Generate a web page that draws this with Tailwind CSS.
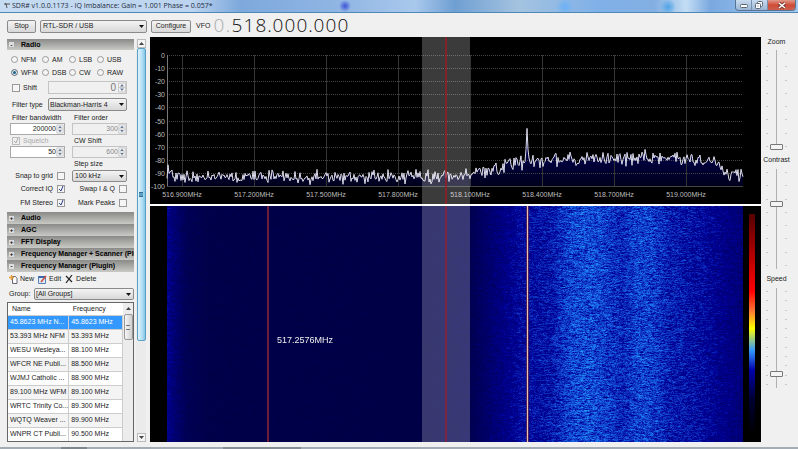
<!DOCTYPE html>
<html lang="en">
<head>
  <meta charset="UTF-8">
  <meta name="viewport" content="width=device-width, initial-scale=1">
  <title>SDR# v1.0.0.1173</title>
  <script src="https://cdn.jsdelivr.net/npm/@tailwindcss/browser@4"></script>
</head>
<body class="flex flex-col h-screen overflow-hidden bg-[#f0f0f0] text-[#222] text-[7px] leading-[10px] font-['Liberation_Sans',Arial,sans-serif]">

  <!-- Title bar -->
  <header class="flex items-start h-[13px] shrink-0 pl-1 border-b border-[#4f88b5] bg-[radial-gradient(circle_at_345px_6px,#4a62d8_1px,transparent_6px),radial-gradient(circle_at_565px_7px,#6fb2f5_1px,transparent_9px),radial-gradient(circle_at_668px_7px,#58a8e8_1px,transparent_8px),linear-gradient(90deg,#c6dcf2_0%,#bcd4ef_24%,#7ea9dc_30%,#8fb5e3_42%,#a9c8ec_52%,#6f9fd2_57%,#a4c3e0_65%,#7fb0e8_75%,#83afe2_82%,#c3ddf4_86%,#7aa9e0_89%,#a5c9ee_100%)]">
    <svg class="w-[7px] h-[9px] mt-px mr-px" viewBox="0 0 7 9"><path d="M0 3h6M2 3l1 4M1 2l2 2" stroke="#555" fill="none"/></svg>
    <h1 class="flex-1 text-[7px] leading-[12px] text-[#1c2a3c] font-['Open_Sans','Noto_Sans',sans-serif]">SDR# v1.0.0.1173 - IQ Imbalance: Gain = 1.001 Phase = 0.057*</h1>
    <div class="flex h-[11px] mr-[2px] rounded-b border border-t-0 border-[#587394] overflow-hidden">
      <button aria-label="Minimize" class="w-4 flex items-center justify-center border-r border-[#7890ac] bg-linear-to-b from-[#c9dcf0] to-[#9bb6d4]">
        <svg class="w-[8px] h-[6px]" viewBox="0 0 8 6"><rect x=".5" y="2.500" width="7" height="3" rx="1" fill="#fff" stroke="#5b6675"/></svg>
      </button>
      <button aria-label="Restore" class="w-4 flex items-center justify-center border-r border-[#7890ac] bg-linear-to-b from-[#c9dcf0] to-[#9bb6d4]">
        <svg class="w-[9px] h-[8px]" viewBox="0 0 9 8" fill="#fff" stroke="#5b6675"><rect x="2.500" y=".5" width="5" height="5" rx="1"/><rect x=".5" y="2.500" width="5" height="5" rx="1"/><path d="M2.500 5h1"/></svg>
      </button>
      <button aria-label="Close" class="w-[27px] flex items-center justify-center bg-linear-to-b from-[#e0988c] via-[#cf4a36] to-[#c9604d]">
        <svg class="w-[8px] h-[7px]" viewBox="0 0 8 7"><path d="M1 1l6 5M7 1l-6 5" stroke="#6d3028" stroke-width="3"/><path d="M1 1l6 5M7 1l-6 5" stroke="#fff" stroke-width="1.600"/></svg>
      </button>
    </div>
  </header>

  <!-- Toolbar -->
  <div class="flex items-center h-6 shrink-0 pl-[7px] pt-[2px]">
    <button class="w-[29px] h-[13px] border border-[#8a8a8a] rounded-xs bg-linear-to-b from-[#f4f4f4] to-[#d8d8d8]">Stop</button>
    <div class="relative ml-1 w-[107px]">
      <select aria-label="Source" class="block w-full h-[13px] pl-[2px] border border-[#8a8a8a] rounded-xs appearance-none bg-linear-to-b from-[#f4f4f4] to-[#d8d8d8]"><option>RTL-SDR / USB</option></select>
      <svg class="absolute right-[3px] top-[5px] w-[5px] h-[3px] pointer-events-none" viewBox="0 0 5 3"><path d="M0 0h5L2.500 3z" fill="#111"/></svg>
    </div>
    <button class="ml-1 w-10 h-[13px] border border-[#8a8a8a] rounded-xs bg-linear-to-b from-[#f4f4f4] to-[#d8d8d8]">Configure</button>
    <span class="ml-[5px] w-[17px]">VFO</span>
    <div class="flex text-[19px] leading-[20px] pb-[2px] font-light text-[#111] text-center font-['Open_Sans',Lato,sans-serif]">
      <span class="w-3 text-[#aaa]">0</span><span class="w-[6px] text-[#aaa]">.</span>
      <span class="w-3">5</span><span class="w-3">1</span><span class="w-3">8</span><span class="w-[5px]">.</span>
      <span class="w-3">0</span><span class="w-3">0</span><span class="w-3">0</span><span class="w-[5px]">.</span>
      <span class="w-3">0</span><span class="w-3">0</span><span class="w-3">0</span>
    </div>
  </div>

  <main class="flex flex-1 min-h-0">
    <!-- Side panels -->
    <aside class="flex w-[150px] shrink-0 pl-[7px] pt-[2px]">
      <div class="flex flex-col w-[127px] shrink-0">
        <h2 class="flex items-center shrink-0 h-[11px] pl-[2px] font-bold bg-linear-to-b from-[#8a8a88] to-[#c9c9c5] text-black"><span class="flex items-center justify-center w-[5px] h-[5px] mr-[7px] bg-[#ddd] text-[6px]">-</span>Radio</h2>

        <form class="flex flex-col shrink-0 h-[162px] pl-[3px] pr-[7px] pt-[3px]">
          <div class="grid grid-cols-[31px_27px_28px_30px] leading-[13px]">
            <label class="flex items-center gap-[3px]"><input type="radio" name="mode" class="appearance-none size-[7px] ml-px rounded-full border border-[#999] bg-[#f5f5f5] checked:bg-[#17628f]">NFM</label>
            <label class="flex items-center gap-[3px]"><input type="radio" name="mode" class="appearance-none size-[7px] ml-px rounded-full border border-[#999] bg-[#f5f5f5] checked:bg-[#17628f]">AM</label>
            <label class="flex items-center gap-[3px]"><input type="radio" name="mode" class="appearance-none size-[7px] ml-px rounded-full border border-[#999] bg-[#f5f5f5] checked:bg-[#17628f]">LSB</label>
            <label class="flex items-center gap-[3px]"><input type="radio" name="mode" class="appearance-none size-[7px] ml-px rounded-full border border-[#999] bg-[#f5f5f5] checked:bg-[#17628f]">USB</label>
            <label class="flex items-center gap-[3px]"><input type="radio" name="mode" checked class="appearance-none size-[7px] ml-px rounded-full border border-[#999] bg-[#f5f5f5] checked:bg-[#17628f] checked:border-[#888] checked:shadow-[inset_0_0_0_1px_#eee]">WFM</label>
            <label class="flex items-center gap-[3px]"><input type="radio" name="mode" class="appearance-none size-[7px] ml-px rounded-full border border-[#999] bg-[#f5f5f5] checked:bg-[#17628f]">DSB</label>
            <label class="flex items-center gap-[3px]"><input type="radio" name="mode" class="appearance-none size-[7px] ml-px rounded-full border border-[#999] bg-[#f5f5f5] checked:bg-[#17628f]">CW</label>
            <label class="flex items-center gap-[3px]"><input type="radio" name="mode" class="appearance-none size-[7px] ml-px rounded-full border border-[#999] bg-[#f5f5f5] checked:bg-[#17628f]">RAW</label>
          </div>

          <div class="flex items-center mt-[2px]">
            <label class="flex items-center shrink-0 gap-[3px] w-[38px] pl-[2px]"><input type="checkbox" class="appearance-none size-[8px] border border-[#999] bg-[#f5f5f5]">Shift</label>
            <div class="flex flex-1 min-w-0 h-[13px] border border-[#c4c4c4]">
              <input aria-label="Shift value" value="0" disabled class="flex-1 min-w-0 text-right text-[10px] pr-[2px] text-[#777]">
              <svg class="spin shrink-0 w-[8px] h-[11px]" viewBox="0 0 8 11"></svg>
            </div>
          </div>

          <div class="flex items-center mt-1">
            <label for="ftype" class="w-[38px] pl-[2px]">Filter type</label>
            <div class="relative flex-1">
              <select id="ftype" class="block w-full h-[13px] pl-px border border-[#8a8a8a] rounded-xs appearance-none bg-linear-to-b from-[#f4f4f4] to-[#d8d8d8]"><option>Blackman-Harris 4</option></select>
              <svg class="absolute right-[3px] top-[5px] w-[5px] h-[3px] pointer-events-none" viewBox="0 0 5 3"><path d="M0 0h5L2.500 3z" fill="#111"/></svg>
            </div>
          </div>

          <div class="grid grid-cols-[55px_55px] gap-x-[7px] mt-[2px]">
            <label for="fbw" class="pl-[2px]">Filter bandwidth</label>
            <label for="ford" class="pl-[2px]">Filter order</label>
            <div class="flex h-3 border border-[#aaa] bg-white">
              <input id="fbw" value="200000" class="flex-1 min-w-0 text-right">
              <svg class="spin shrink-0 w-[8px] h-[10px]" viewBox="0 0 8 11"></svg>
            </div>
            <div class="flex h-3 border border-[#c4c4c4]">
              <input id="ford" value="300" disabled class="flex-1 min-w-0 text-right text-[#8a8a8a]">
              <svg class="spin shrink-0 w-[8px] h-[10px]" viewBox="0 0 8 11"></svg>
            </div>
            <label class="flex items-center gap-[3px] h-[11px] pl-[2px] text-[#aaa]"><span class="relative size-[8px]"><input type="checkbox" checked disabled class="block appearance-none size-[8px] border border-[#bbb]"><svg class="absolute inset-0" viewBox="0 0 8 8"><path d="M2 4l2 2 2-5" stroke="#aaa" fill="none"/></svg></span>Squelch</label>
            <label for="cws" class="pl-[2px] pt-px">CW Shift</label>
            <div class="flex h-3 border border-[#aaa] bg-white">
              <input aria-label="Squelch level" value="50" class="flex-1 min-w-0 text-right">
              <svg class="spin shrink-0 w-[8px] h-[10px]" viewBox="0 0 8 11"></svg>
            </div>
            <div class="flex h-3 border border-[#c4c4c4]">
              <input id="cws" value="600" disabled class="flex-1 min-w-0 text-right text-[#8a8a8a]">
              <svg class="spin shrink-0 w-[8px] h-[10px]" viewBox="0 0 8 11"></svg>
            </div>
            <span></span>
            <label for="step" class="pl-[2px] h-[12px] pt-px">Step size</label>
            <label class="flex items-center justify-end gap-1">Snap to grid<input type="checkbox" class="appearance-none size-[8px] border border-[#999] bg-[#f5f5f5]"></label>
            <div class="relative">
              <select id="step" class="block w-full h-[12px] pl-[2px] border border-[#8a8a8a] rounded-xs appearance-none bg-linear-to-b from-[#f4f4f4] to-[#d8d8d8]"><option>100 kHz</option></select>
              <svg class="absolute right-[3px] top-[5px] w-[5px] h-[3px] pointer-events-none" viewBox="0 0 5 3"><path d="M0 0h5L2.500 3z" fill="#111"/></svg>
            </div>
            <label class="flex items-center justify-end gap-1 h-[14px]">Correct IQ<span class="relative size-[8px]"><input type="checkbox" checked class="block appearance-none size-[8px] border border-[#999] bg-[#f5f5f5]"><svg class="absolute inset-0" viewBox="0 0 8 8"><path d="M2 4l2 2 2-5" stroke="#2b3f8c" fill="none"/></svg></span></label>
            <label class="flex items-center justify-end gap-1 h-[14px]">Swap I &amp; Q<input type="checkbox" class="appearance-none size-[8px] border border-[#999] bg-[#f5f5f5]"></label>
            <label class="flex items-center justify-end gap-1 h-[13px]">FM Stereo<span class="relative size-[8px]"><input type="checkbox" checked class="block appearance-none size-[8px] border border-[#999] bg-[#f5f5f5]"><svg class="absolute inset-0" viewBox="0 0 8 8"><path d="M2 4l2 2 2-5" stroke="#2b3f8c" fill="none"/></svg></span></label>
            <label class="flex items-center justify-end gap-1 h-[13px]">Mark Peaks<input type="checkbox" class="appearance-none size-[8px] border border-[#999] bg-[#f5f5f5]"></label>
          </div>
        </form>

        <div class="shrink-0 font-bold text-black whitespace-nowrap">
          <h2 class="flex items-center h-3 pl-[2px] overflow-hidden bg-linear-to-b from-[#8a8a88] to-[#c9c9c5]"><span class="flex items-center justify-center shrink-0 w-[5px] h-[5px] mr-[7px] bg-[#ddd] text-[6px]">+</span>Audio</h2>
          <h2 class="flex items-center h-3 pl-[2px] overflow-hidden bg-linear-to-b from-[#8a8a88] to-[#c9c9c5]"><span class="flex items-center justify-center shrink-0 w-[5px] h-[5px] mr-[7px] bg-[#ddd] text-[6px]">+</span>AGC</h2>
          <h2 class="flex items-center h-3 pl-[2px] overflow-hidden bg-linear-to-b from-[#8a8a88] to-[#c9c9c5]"><span class="flex items-center justify-center shrink-0 w-[5px] h-[5px] mr-[7px] bg-[#ddd] text-[6px]">+</span>FFT Display</h2>
          <h2 class="flex items-center h-3 pl-[2px] overflow-hidden bg-linear-to-b from-[#8a8a88] to-[#c9c9c5]"><span class="flex items-center justify-center shrink-0 w-[5px] h-[5px] mr-[7px] bg-[#ddd] text-[6px]">+</span>Frequency Manager + Scanner (Plugin)</h2>
          <h2 class="flex items-center h-3 pl-[2px] overflow-hidden bg-linear-to-b from-[#8a8a88] to-[#c9c9c5]"><span class="flex items-center justify-center shrink-0 w-[5px] h-[5px] mr-[7px] bg-[#ddd] text-[6px]">-</span>Frequency Manager (Plugin)</h2>
        </div>

        <div class="flex shrink-0 items-center h-[14px] pl-[2px] gap-1">
          <button class="flex items-center gap-[2px]"><svg class="w-[9px] h-[9px]" viewBox="0 0 9 9"><path d="M3.500 1.500h3l1.500 2v5H3.500z" fill="#fff" stroke="#667"/><path d="M2.500 0v5M0 2.500h5" stroke="#e8a33a" stroke-width="1.500"/></svg>New</button>
          <button class="flex items-center gap-[2px]"><svg class="w-[9px] h-[9px]" viewBox="0 0 9 9"><path d="M.5 1.500h7v7h-7z" fill="#dfe9f8" stroke="#5d7fb8"/><path d="M.5 2h7" stroke="#3c66b0" stroke-width="2"/><path d="M3 7l5-6" stroke="#c94f3d" stroke-width="1.500"/></svg>Edit</button>
          <button class="flex items-center gap-[3px]"><svg class="w-[8px] h-[8px]" viewBox="0 0 8 8"><path d="M1 1l6 6M7 0L1 8" stroke="#222" stroke-width="1.200"/></svg>Delete</button>
        </div>

        <div class="flex shrink-0 items-center h-4 pl-[2px]">
          <label for="group" class="w-[25px]">Group:</label>
          <div class="relative flex-1">
            <select id="group" class="block w-full h-3 pl-px border border-[#8a8a8a] rounded-xs appearance-none bg-linear-to-b from-[#f4f4f4] to-[#d8d8d8]"><option>[All Groups]</option></select>
            <svg class="absolute right-[3px] top-[5px] w-[5px] h-[3px] pointer-events-none" viewBox="0 0 5 3"><path d="M0 0h5L2.500 3z" fill="#111"/></svg>
          </div>
        </div>

        <!-- Frequency list -->
        <div class="flex flex-1 min-h-0 overflow-hidden mb-[7px] border border-[#666] bg-white">
          <table class="flex-1 self-start table-fixed border-collapse text-left whitespace-nowrap">
            <thead><tr class="h-3 border-b border-[#ddd]"><th class="w-[57px] pl-1 font-normal">Name</th><th class="pl-1 font-normal">Frequency</th></tr></thead>
            <tbody class="[&_td]:pl-[2px] [&_td]:border [&_td]:border-l-0 [&_td]:border-[#ccc] [&_tr]:h-[14px] [&_tr:nth-child(even)]:bg-[#f4f4f4]">
              <tr class="bg-[#3399ff] text-white"><td>45.8623 MHz N...</td><td>45.8623 MHz</td></tr>
              <tr><td>53.393 MHz NFM</td><td>53.393 MHz</td></tr>
              <tr><td>WESU Wesleya...</td><td>88.100 MHz</td></tr>
              <tr><td>WFCR NE Publi...</td><td>88.500 MHz</td></tr>
              <tr><td>WJMJ Catholic ...</td><td>88.900 MHz</td></tr>
              <tr><td>89.100 MHz WFM</td><td>89.100 MHz</td></tr>
              <tr><td>WRTC Trinity Co...</td><td>89.300 MHz</td></tr>
              <tr><td>WQTQ Weaver ...</td><td>89.900 MHz</td></tr>
              <tr><td>WNPR CT Publi...</td><td>90.500 MHz</td></tr>
            </tbody>
          </table>
          <div class="flex flex-col items-center w-[10px] shrink-0 bg-[#ececec]">
            <svg class="w-[5px] h-[3px] mt-1 mb-1" viewBox="0 0 5 3"><path d="M0 3h5L2.500 0z" fill="#444"/></svg>
            <div class="flex items-center justify-center w-[9px] h-[26px] border border-[#999] rounded-xs bg-linear-to-r from-[#f6f6f6] to-[#cfcfcf]"><span class="w-[4px] h-[5px] border-y border-[#777]"></span></div>
          </div>
        </div>
      </div>

      <!-- Sidebar scrollbar -->
      <div class="flex flex-col items-center w-[10px] ml-[2px] mb-[7px] bg-[#ebebeb]">
        <div class="flex items-center justify-center w-[9px] h-[9px] border border-[#bbb] bg-[#f4f4f4]"><svg class="w-[5px] h-[3px]" viewBox="0 0 5 3"><path d="M0 3h5L2.500 0z" fill="#444"/></svg></div>
        <div class="flex items-center justify-center w-[9px] h-[293px] border border-[#5b9fc4] rounded-xs bg-linear-to-r from-[#dff3fd] via-[#b9e3f8] to-[#86c5e6]"><span class="w-[4px] h-[5px] border-y border-[#386f8f] bg-[#5b9fc4]"></span></div>
        <div class="flex items-center justify-center w-[9px] h-[9px] mt-auto border border-[#bbb] bg-[#f4f4f4]"><svg class="w-[5px] h-[3px]" viewBox="0 0 5 3"><path d="M0 0h5L2.500 3z" fill="#444"/></svg></div>
      </div>
    </aside>

    <!-- Spectrum and waterfall -->
    <section class="flex flex-col flex-1 min-w-0 mb-[7px] bg-white gap-[2px]">
      <svg id="spectrum" class="block w-full h-[167px] shrink-0 bg-black" viewBox="0 0 611 167"></svg>
      <div class="relative flex-1 min-h-0 bg-black">
        <canvas id="waterfall" width="611" height="236" class="block w-full h-full"></canvas>
        <span class="absolute left-[127px] top-[129px] text-[9px] leading-[10px] text-[#eee]">517.2576MHz</span>
        <div class="absolute right-[6px] top-[8px] bottom-[8px] w-[6px] bg-[linear-gradient(#500_0%,#c00_24%,#f00_35%,#f73_44%,#ff0_52%,#39f_62%,#00a_71%,#003_84%,#000_100%)]"></div>
      </div>
    </section>

    <!-- Sliders -->
    <section class="flex flex-col w-[37px] shrink-0 items-center pr-[6px]">
      <label for="zoom" class="h-[13px] leading-[9px]">Zoom</label>
      <div class="flex items-stretch justify-center h-[100px] gap-[2px]">
        <div class="ticks flex flex-col justify-between py-[3px]"></div>
        <input id="zoom" type="range" value="0" class="appearance-none [writing-mode:vertical-lr] [direction:rtl] w-[13px] h-[100px] bg-[linear-gradient(90deg,transparent_6px,#b0b0b0_6px,#b0b0b0_7px,transparent_7px)] [&::-webkit-slider-thumb]:appearance-none [&::-webkit-slider-thumb]:w-[13px] [&::-webkit-slider-thumb]:h-[6px] [&::-webkit-slider-thumb]:border [&::-webkit-slider-thumb]:border-[#777] [&::-webkit-slider-thumb]:bg-[#f4f4f4] [&::-webkit-slider-thumb]:rounded-[1px]">
        <div class="ticks flex flex-col justify-between py-[3px]"></div>
      </div>
      <label for="contrast" class="h-[19px] pt-[5px]">Contrast</label>
      <div class="flex items-stretch justify-center h-[100px] gap-[2px]">
        <div class="ticks flex flex-col justify-between py-[3px]"></div>
        <input id="contrast" type="range" value="66" class="appearance-none [writing-mode:vertical-lr] [direction:rtl] w-[13px] h-[100px] bg-[linear-gradient(90deg,transparent_6px,#b0b0b0_6px,#b0b0b0_7px,transparent_7px)] [&::-webkit-slider-thumb]:appearance-none [&::-webkit-slider-thumb]:w-[13px] [&::-webkit-slider-thumb]:h-[6px] [&::-webkit-slider-thumb]:border [&::-webkit-slider-thumb]:border-[#777] [&::-webkit-slider-thumb]:bg-[#f4f4f4] [&::-webkit-slider-thumb]:rounded-[1px]">
        <div class="ticks flex flex-col justify-between py-[3px]"></div>
      </div>
      <label for="speed" class="h-[19px] pt-[5px]">Speed</label>
      <div class="flex items-stretch justify-center h-[100px] gap-[2px]">
        <div class="ticks flex flex-col justify-between py-[3px]"></div>
        <input id="speed" type="range" value="12" class="appearance-none [writing-mode:vertical-lr] [direction:rtl] w-[13px] h-[100px] bg-[linear-gradient(90deg,transparent_6px,#b0b0b0_6px,#b0b0b0_7px,transparent_7px)] [&::-webkit-slider-thumb]:appearance-none [&::-webkit-slider-thumb]:w-[13px] [&::-webkit-slider-thumb]:h-[6px] [&::-webkit-slider-thumb]:border [&::-webkit-slider-thumb]:border-[#777] [&::-webkit-slider-thumb]:bg-[#f4f4f4] [&::-webkit-slider-thumb]:rounded-[1px]">
        <div class="ticks flex flex-col justify-between py-[3px]"></div>
      </div>
    </section>
  </main>

  <footer class="flex h-[2px] shrink-0 -mt-[2px] bg-[#a3acb5]">
    <span class="w-[26px] ml-[61px] bg-[#7d858d]"></span>
    <span class="w-[78px] ml-[136px] bg-[#858c94]"></span>
  </footer>

  <script>
  // small seeded generator so the noise is stable between loads
  let seed = 1173;
  function rnd() {
    seed = (seed * 1664525 + 1013904223) >>> 0;
    return seed / 4294967296;
  }

  function curve(points, x) {
    for (let i = 1; i < points.length; i++) {
      if (x <= points[i][0]) {
        const [x0, y0] = points[i - 1];
        const [x1, y1] = points[i];
        return y0 + (y1 - y0) * (x - x0) / (x1 - x0);
      }
    }
    return points[points.length - 1][1];
  }

  document.querySelectorAll('.spin').forEach((el) => {
    el.innerHTML = '<path d="M.5 1h7v9h-7zM.5 5.500h7" fill="#f3f3f3" stroke="#c8c8c8"/><path d="M2 4.500h4L4 2zM2 6.500h4L4 9z" fill="#667a99"/>';
  });
  document.querySelectorAll('.ticks').forEach((el) => {
    el.innerHTML = '<i class="block w-[2px] h-px bg-[#c8c8c8]"></i>'.repeat(el.closest('div.flex.items-stretch').querySelector('#speed') ? 11 : 8);
  });

  // Spectrum
  const LEFT = 17, RIGHT = 593, TOP = 18, STEP = 13;
  const level = [[17, 88], [24, 91], [40, 93], [290, 93], [320, 91], [350, 86], [370, 82], [400, 80], [440, 78], [520, 78], [550, 81], [565, 83], [577, 88], [593, 91]];
  const bottom = TOP + STEP * 10 + 1;
  const yOf = (db) => TOP + db * (bottom - TOP) / 100;
  let out = '<defs><linearGradient id="fill" x1="0" y1="110" x2="0" y2="149" gradientUnits="userSpaceOnUse"><stop offset="0" stop-color="#000050"/><stop offset="1" stop-color="#00001c"/></linearGradient></defs>';

  let line = '';
  for (let x = LEFT; x <= RIGHT; x++) {
    let db = curve(level, x) + (rnd() + rnd() - 1) * 6;
    if (rnd() > 0.96) db += 4;
    if (x === 376 || x === 378) db = 72;
    if (x === 377) db = 56;
    line += (line ? 'L' : 'M') + x + ' ' + yOf(Math.min(db, 99)).toFixed(1);
  }
  out += `<path d="${line}L${RIGHT} ${bottom}L${LEFT} ${bottom}z" fill="url(#fill)"/>`;

  for (let i = 0; i <= 10; i++) {
    const y = Math.round(yOf(i * 10)) + 0.5;
    out += `<path d="M${LEFT} ${y}H${RIGHT}" stroke="#444" stroke-dasharray="${i === 10 ? 'none' : '1 1'}"/>`;
    out += `<text x="15" y="${y + 2}" text-anchor="end">${i ? '-' + i * 10 : '0'}</text>`;
  }
  for (let i = 0; i < 8; i++) {
    const x = 32 + i * 72;
    out += `<path d="M${x}.5 ${TOP}V${bottom}" stroke="#333"/>`;
    out += `<text x="${x}" y="160" text-anchor="middle">${(516.9 + i * 0.3).toFixed(3)}MHz</text>`;
  }
  out += `<path d="M${LEFT}.5 ${TOP}V${bottom}" stroke="#777"/>`;
  out += `<path d="${line}" fill="none" stroke="#dcdcec" stroke-width="1"/>`;
  out += '<rect x="272" y="0" width="48" height="167" fill="#fff" fill-opacity=".23"/><path d="M296 0V167" stroke="#9c1c24" stroke-width="1.500"/>';
  const spectrum = document.getElementById('spectrum');
  spectrum.setAttribute('font-size', '7');
  spectrum.setAttribute('fill', '#bdbdbd');
  spectrum.innerHTML = out;

  // Waterfall
  const heat = [[17, 0.3], [24, 0.2], [36, 0.09], [60, 0.05], [272, 0.04], [320, 0.08], [345, 0.22], [370, 0.36], [400, 0.4], [420, 0.54], [440, 0.57], [460, 0.5], [472, 0.45], [485, 0.53], [500, 0.53], [520, 0.43], [550, 0.37], [575, 0.28], [593, 0.22]];
  const ctx = document.getElementById('waterfall').getContext('2d');
  const img = ctx.createImageData(611, 236);
  for (let y = 0; y < 236; y++) {
    let drift = 0;
    for (let x = LEFT; x < RIGHT; x++) {
      const h = curve(heat, x);
      // neighbouring bins share part of their noise
      drift = drift * 0.45 + (rnd() + rnd() - 1) * 0.75;
      const v = Math.max(0, h + drift * h * 0.5);
      const over = Math.max(0, v - 0.34);
      const p = (y * 611 + x) * 4;
      img.data[p] = over * 80;
      img.data[p + 1] = over * 330;
      img.data[p + 2] = Math.min(235, 60 + v * 265);
      img.data[p + 3] = 255;
    }
  }
  ctx.putImageData(img, 0, 0);
  ctx.fillStyle = 'rgba(255,255,255,.22)';
  ctx.fillRect(272, 0, 48, 236);
  ctx.fillStyle = '#7e2444';
  ctx.fillRect(295, 0, 2, 236);
  ctx.fillStyle = '#6e1c3c';
  ctx.fillRect(117, 0, 2, 236);
  ctx.fillStyle = '#4a2060';
  ctx.fillRect(376, 0, 3, 236);
  ctx.fillStyle = '#e8c4b4';
  ctx.fillRect(377, 0, 1, 236);
  </script>
</body>
</html>
